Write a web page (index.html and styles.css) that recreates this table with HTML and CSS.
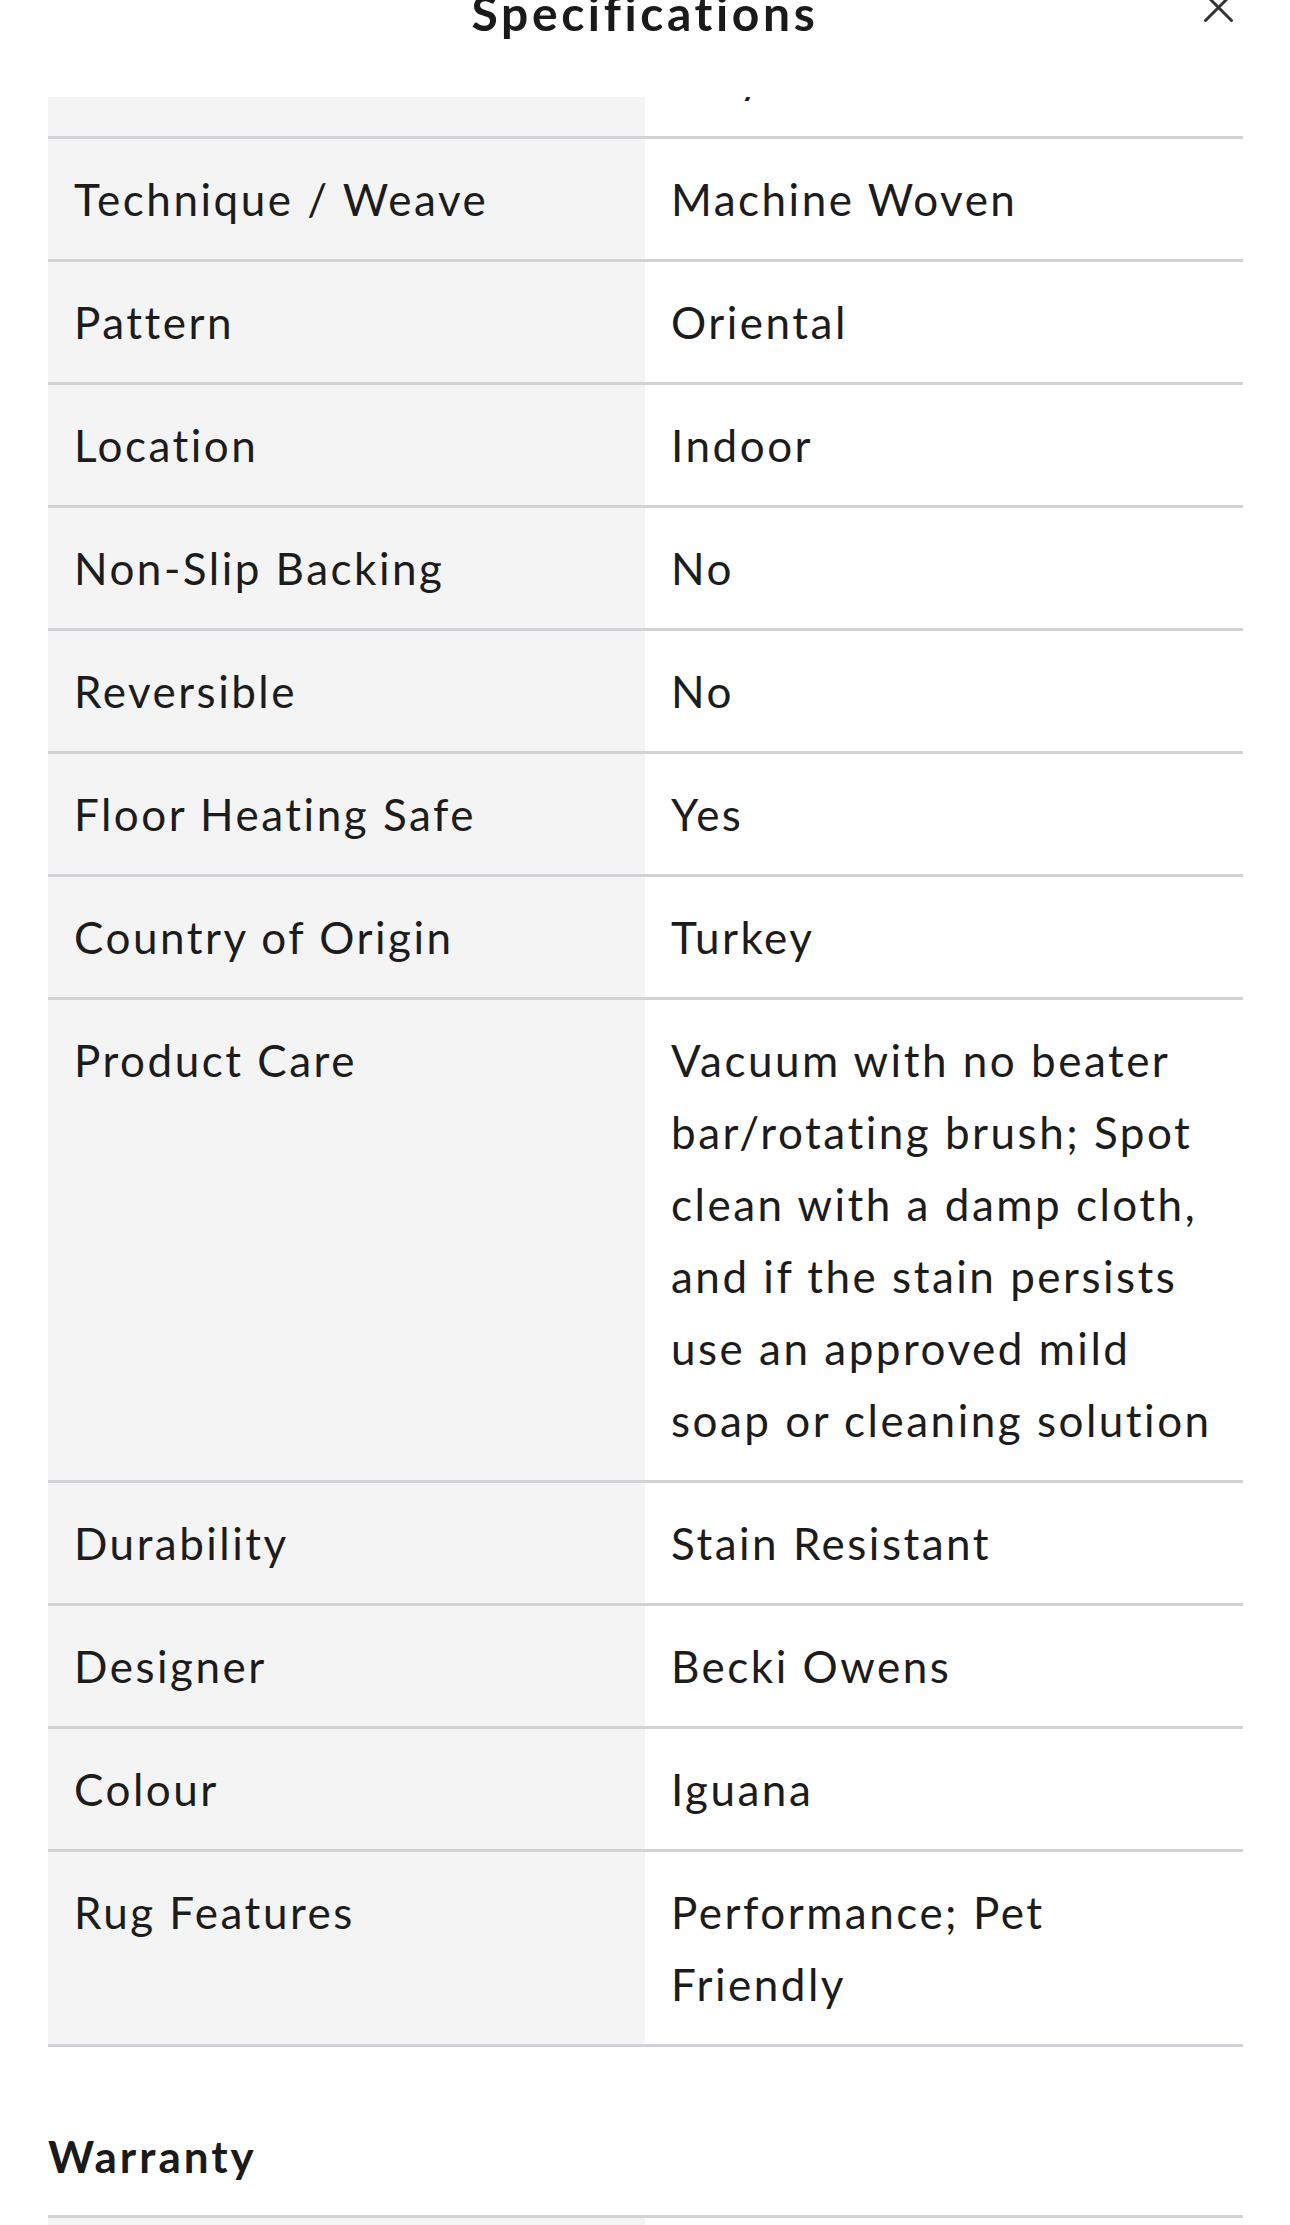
FILE: index.html
```html
<!DOCTYPE html>
<html lang="en">
<head>
<meta charset="utf-8">
<title>Specifications</title>
<link rel="stylesheet" href="styles.css">
</head>
<body>
<header class="sheet-header">
  <h1 class="sheet-title">Specifications</h1>
  <button class="close-btn" aria-label="Close">
    <svg viewBox="0 0 29 29" width="29" height="29"><path d="M1.5 1.5 L27.5 27.5 M27.5 1.5 L1.5 27.5" stroke="#333" stroke-width="3" stroke-linecap="round" fill="none"/></svg>
  </button>
</header>
<main class="sheet-body">
  <div class="spec-table">
    <div class="spec-row"><div class="spec-label">Material</div><div class="spec-value">Polyester</div></div>
    <div class="spec-row"><div class="spec-label">Technique / Weave</div><div class="spec-value">Machine Woven</div></div>
    <div class="spec-row"><div class="spec-label">Pattern</div><div class="spec-value">Oriental</div></div>
    <div class="spec-row"><div class="spec-label">Location</div><div class="spec-value">Indoor</div></div>
    <div class="spec-row"><div class="spec-label">Non-Slip Backing</div><div class="spec-value">No</div></div>
    <div class="spec-row"><div class="spec-label">Reversible</div><div class="spec-value">No</div></div>
    <div class="spec-row"><div class="spec-label">Floor Heating Safe</div><div class="spec-value">Yes</div></div>
    <div class="spec-row"><div class="spec-label">Country of Origin</div><div class="spec-value">Turkey</div></div>
    <div class="spec-row"><div class="spec-label">Product Care</div><div class="spec-value">Vacuum with no beater<br>bar/rotating brush; Spot<br>clean with a damp cloth,<br>and if the stain persists<br>use an approved mild<br>soap or cleaning solution</div></div>
    <div class="spec-row"><div class="spec-label">Durability</div><div class="spec-value">Stain Resistant</div></div>
    <div class="spec-row"><div class="spec-label">Designer</div><div class="spec-value">Becki Owens</div></div>
    <div class="spec-row"><div class="spec-label">Colour</div><div class="spec-value">Iguana</div></div>
    <div class="spec-row"><div class="spec-label">Rug Features</div><div class="spec-value">Performance; Pet<br>Friendly</div></div>
  </div>
  <h2 class="section-title">Warranty</h2>
  <div class="spec-table spec-table--top">
    <div class="spec-row"><div class="spec-label">Warranty</div><div class="spec-value">1 Year Limited</div></div>
  </div>
</main>
</body>
</html>
```
FILE: styles.css
```css
* { box-sizing: border-box; }
html, body { margin: 0; padding: 0; background: #fff; }
body {
  font-family: Lato, "Noto Sans", sans-serif;
  color: #1c1c1c;
  overflow: hidden;
}
.sheet-header {
  position: fixed;
  top: 0;
  left: 0;
  right: 0;
  height: 97px;
  background: #fff;
  z-index: 10;
}
.sheet-title {
  margin: -9px 0 0;
  text-align: center;
  font-size: 48px;
  line-height: 44px;
  font-weight: 700;
  color: #1a1a1a;
  letter-spacing: 3.6px;
}
.close-btn {
  position: absolute;
  left: 1204px;
  top: -7px;
  width: 29px;
  height: 29px;
  padding: 0;
  border: 0;
  background: none;
}
.close-btn svg { display: block; }
.sheet-body {
  padding: 16px 47px 0 48px;
}
.spec-table--top { border-top: 3px solid #d2d2d6; }
.spec-row {
  display: grid;
  grid-template-columns: 597px 1fr;
  border-bottom: 3px solid #d2d2d6;
}
.spec-label,
.spec-value {
  padding: 24px 26px;
  font-size: 44px;
  line-height: 72px;
  letter-spacing: 2.5px;
}
.spec-label { background: #f4f4f4; }
.spec-value { background: #fff; }
.section-title {
  margin: 87px 0 0;
  padding-bottom: 37px;
  font-size: 44px;
  line-height: 44px;
  font-weight: 700;
  color: #1a1a1a;
  letter-spacing: 3px;
}
```
